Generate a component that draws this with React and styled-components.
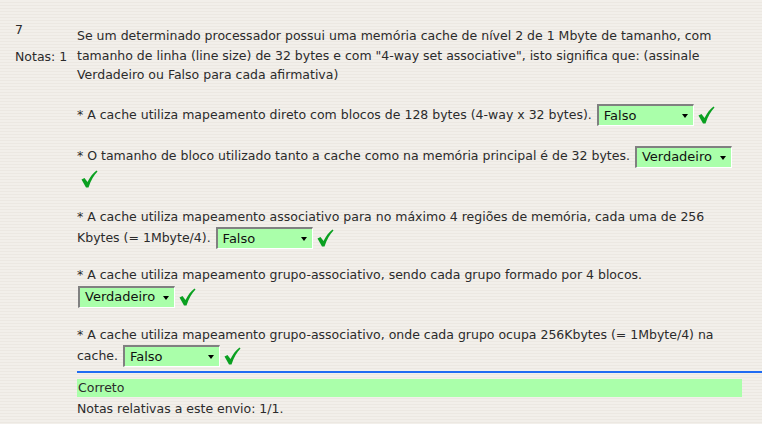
import React from 'react';
import styled, { createGlobalStyle } from 'styled-components';

const GlobalStyle = createGlobalStyle`
  html, body {
    margin: 0;
    padding: 0;
  }
  body {
    width: 762px;
    height: 424px;
    overflow: hidden;
    background-color: #f1eee9;
    background-image: repeating-linear-gradient(
      to bottom,
      #f2efea 0px,
      #f2efea 2px,
      #ece8e2 2px,
      #ece8e2 3px
    );
    font-family: "DejaVu Sans", Verdana, sans-serif;
    font-size: 12.5px;
    color: #2b2b2b;
  }
`;

const Question = styled.div`
  display: flex;
  align-items: flex-start;
`;

const Info = styled.div`
  width: 62px;
  flex: none;
  padding: 20px 0 0 15px;
  line-height: 19.5px;
`;

const Number = styled.div`
  margin-bottom: 7px;
`;

const Content = styled.div`
  width: 665px;
  padding-top: 26px;
  line-height: 19.5px;
`;

const Text = styled.p`
  margin: 0 0 ${p => p.$gap}px;
  line-height: ${p => p.$lh}px;
`;

const Dropdown = styled.span`
  display: inline-flex;
  align-items: center;
  justify-content: space-between;
  box-sizing: border-box;
  width: 97px;
  height: 22px;
  padding: 0 5px 0 5px;
  margin-left: 1px;
  vertical-align: middle;
  background: #aaffaa;
  border-style: solid;
  border-width: 2px 1px 1px 2px;
  border-color: #808080 #ffffff #ffffff #808080;
  color: #111;
  font-size: 13px;
  line-height: 18px;
`;

const Arrow = styled.span`
  width: 0;
  height: 0;
  border-left: 3.5px solid transparent;
  border-right: 3.5px solid transparent;
  border-top: 4px solid #000;
  margin-top: 1px;
`;

const Tick = styled.svg`
  width: 17px;
  height: 18px;
  margin-left: 4px;
  vertical-align: middle;
`;

const Rule = styled.div`
  border-top: 2px solid #1f6bf2;
  margin: 4px -20px 6px 0;
`;

const Feedback = styled.div`
  background: #aaffaa;
  height: 18px;
  line-height: 18px;
  padding-left: 1px;
`;

const Grade = styled.div`
  line-height: 24px;
`;

const Check = () => (
  <Tick viewBox="0 0 17 18">
    <path
      d="M0.5 9.5 L3.5 8 L6.5 12 C9 7 12 3 15.5 0.5 L16.5 1.5 C13 5 10 10 7.5 17.5 L5 17.5 Z"
      fill="#0aa020"
    />
  </Tick>
);

const Select = ({ value }) => (
  <Dropdown>
    <span>{value}</span>
    <Arrow />
  </Dropdown>
);

const items = [
  { text: '* A cache utiliza mapeamento direto com blocos de 128 bytes (4-way x 32 bytes).', value: 'Falso', gap: 19 },
  { text: '* O tamanho de bloco utilizado tanto a cache como na memória principal é de 32 bytes.', value: 'Verdadeiro', gap: 17 },
  { text: '* A cache utiliza mapeamento associativo para no máximo 4 regiões de memória, cada uma de 256 Kbytes (= 1Mbyte/4).', value: 'Falso', gap: 15 },
  { text: '* A cache utiliza mapeamento grupo-associativo, sendo cada grupo formado por 4 blocos.', value: 'Verdadeiro', gap: 16 },
  { text: '* A cache utiliza mapeamento grupo-associativo, onde cada grupo ocupa 256Kbytes (= 1Mbyte/4) na cache.', value: 'Falso', gap: 0 },
];

export default function App() {
  return (
    <>
      <GlobalStyle />
      <Question>
        <Info>
          <Number>7</Number>
          <div>Notas: 1</div>
        </Info>
        <Content>
          <Text $gap={19} $lh={19.5}>
            Se um determinado processador possui uma memória cache de nível 2 de 1 Mbyte de tamanho, com
            tamanho de linha (line size) de 32 bytes e com "4-way set associative", isto significa que: (assinale
            Verdadeiro ou Falso para cada afirmativa)
          </Text>
          {items.map((item, i) => (
            <Text key={i} $gap={item.gap} $lh={21}>
              {item.text} <Select value={item.value} />
              <Check />
            </Text>
          ))}
          <Rule />
          <Feedback>Correto</Feedback>
          <Grade>Notas relativas a este envio: 1/1.</Grade>
        </Content>
      </Question>
    </>
  );
}
